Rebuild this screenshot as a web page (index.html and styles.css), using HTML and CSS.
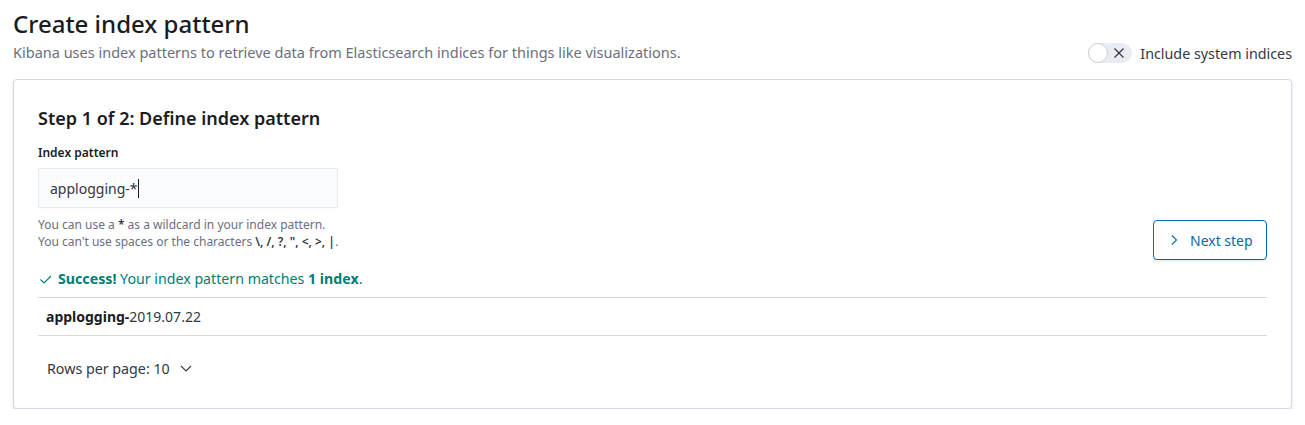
FILE: index.html
```html
<!DOCTYPE html>
<html>
<head>
<meta charset="utf-8">
<link rel="stylesheet" href="styles.css">
</head>
<body>
<div class="page">
  <h1 class="title">Create index pattern</h1>
  <div class="header-row">
    <p class="subtitle">Kibana uses index patterns to retrieve data from Elasticsearch indices for things like visualizations.</p>
    <label class="switch-wrap">
      <span class="switch">
        <span class="knob"></span>
        <svg class="switch-x" width="12" height="12" viewBox="0 0 12 12"><path d="M1.5 1.5l9 9M10.5 1.5l-9 9" stroke="#343741" stroke-width="1.2" fill="none"/></svg>
      </span>
      <span class="switch-label">Include system indices</span>
    </label>
  </div>
  <div class="panel">
    <h2 class="step-title">Step 1 of 2: Define index pattern</h2>
    <div class="form-row">
      <div class="form-left">
        <div class="label">Index pattern</div>
        <div class="input"><span>applogging-*</span><span class="caret"></span></div>
        <div class="help">You can use a <b>*</b> as a wildcard in your index pattern.<br>You can't use spaces or the characters <b>\, /, ?, ", &lt;, &gt;, |</b>.</div>
      </div>
      <button class="next-btn">
        <svg width="16" height="16" viewBox="0 0 16 16"><path d="M6 3.5l4.5 4.5L6 12.5" stroke="#006BB4" stroke-width="1.1" fill="none"/></svg>
        <span>Next step</span>
      </button>
    </div>
    <div class="success">
      <svg width="16" height="16" viewBox="0 0 16 16"><path d="M2.5 8.5l3.5 3.5 7-7" stroke="#017D73" stroke-width="1.1" fill="none"/></svg>
      <span><b>Success!</b> Your index pattern matches <b>1 index</b>.</span>
    </div>
    <div class="table">
      <div class="row"><b>applogging-</b>2019.07.22</div>
    </div>
    <div class="pager">
      <span>Rows per page: 10</span>
      <svg width="16" height="16" viewBox="0 0 16 16"><path d="M3 6l5 5 5-5" stroke="#343741" stroke-width="1.1" fill="none"/></svg>
    </div>
  </div>
</div>
</body>
</html>
```
FILE: styles.css
```css
* { box-sizing: border-box; }
body {
  margin: 0;
  background: #fff;
  font-family: "Noto Sans", "Open Sans", sans-serif;
  color: #343741;
}
.page {
  padding: 7px 13px 0 13px;
}
.title {
  margin: 0;
  font-size: 24px;
  line-height: 34px;
  font-weight: 500;
  color: #1a1c21;
}
.header-row {
  display: flex;
  justify-content: space-between;
  align-items: flex-end;
  margin-top: 1px;
  margin-bottom: 17px;
}
.subtitle {
  margin: 0;
  font-size: 14.5px;
  line-height: 20px;
  color: #69707D;
}
.switch-wrap {
  display: flex;
  align-items: center;
  gap: 8px;
  margin-bottom: -1px;
}
.switch {
  position: relative;
  width: 44px;
  height: 20px;
  border-radius: 10px;
  background: #E9EDF3;
  display: flex;
  align-items: center;
  justify-content: flex-end;
  padding-right: 7px;
}
.knob {
  position: absolute;
  left: 0;
  top: 0;
  width: 20px;
  height: 20px;
  border-radius: 50%;
  background: #fff;
  border: 1px solid #C9CED6;
}
.switch-label {
  font-size: 14.3px;
  color: #343741;
}
.panel {
  border: 1px solid #D3DAE6;
  border-radius: 4px;
  box-shadow: 0 1px 3px rgba(152,162,179,0.25), 0 2px 2px -1px rgba(152,162,179,0.3);
  padding: 24px 24px 30px 24px;
  background: #fff;
}
.step-title {
  margin: 0;
  font-size: 18px;
  line-height: 28px;
  font-weight: 600;
  color: #1a1c21;
}
.form-row {
  display: flex;
  justify-content: space-between;
  align-items: flex-end;
  margin-top: 11px;
}
.label {
  font-size: 12px;
  line-height: 20px;
  font-weight: 600;
  color: #1a1c21;
}
.input {
  margin-top: 5px;
  width: 300px;
  height: 40px;
  background: #FBFCFD;
  border: 1px solid #E6E9EE;
  box-shadow: 0 1px 1px -1px rgba(152,162,179,0.2);
  display: flex;
  align-items: center;
  padding-left: 11px;
  font-size: 14px;
  color: #343741;
}
.caret {
  display: inline-block;
  width: 1px;
  height: 19px;
  background: #1a1c21;
  margin-left: 1px;
}
.help {
  margin-top: 8px;
  font-size: 12px;
  line-height: 17px;
  color: #69707D;
}
.help b { color: #343741; font-weight: 600; }
.next-btn {
  margin-bottom: -10px;
  display: flex;
  align-items: center;
  gap: 8px;
  height: 40px;
  width: 114px;
  padding: 0 12px;
  border: 1px solid #006BB4;
  border-radius: 4px;
  background: #fff;
  color: #006BB4;
  font-family: inherit;
  font-size: 14px;
  box-shadow: 0 2px 2px -1px rgba(152,162,179,0.3);
}
.success {
  display: flex;
  align-items: center;
  gap: 4px;
  margin-top: 19px;
  font-size: 14.2px;
  line-height: 20px;
  color: #017D73;
}
.success b { font-weight: 700; }
.table {
  margin-top: 8px;
  border-top: 1px solid #D3DAE6;
  border-bottom: 1px solid #D3DAE6;
}
.row {
  height: 37px;
  display: flex;
  align-items: center;
  padding-left: 8px;
  font-size: 14px;
  color: #343741;
}
.row b { font-weight: 700; color: #1a1c21; }
.pager {
  display: flex;
  align-items: center;
  gap: 8px;
  padding-left: 9px;
  margin-top: 22px;
  height: 20px;
  font-size: 14.25px;
  color: #343741;
}
```
